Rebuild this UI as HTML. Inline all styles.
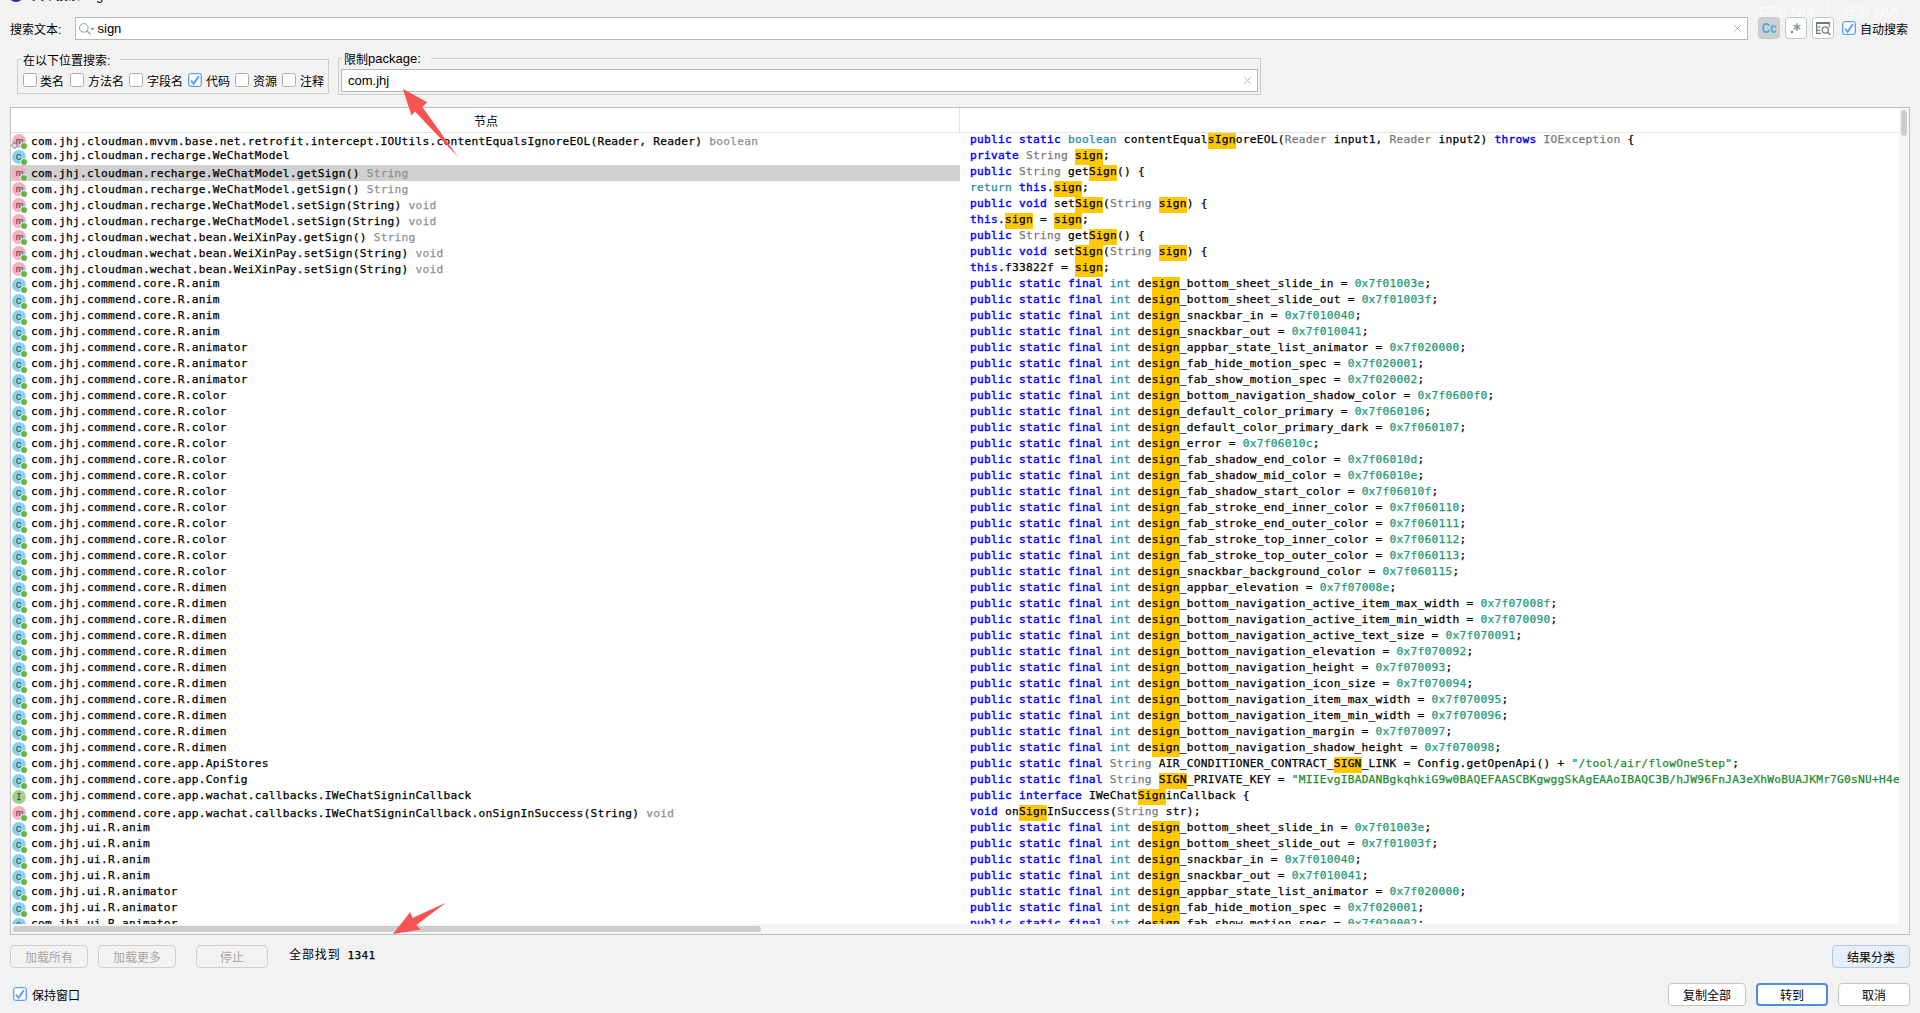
<!DOCTYPE html>
<html lang="zh-CN">
<head>
<meta charset="utf-8">
<title>文本搜索: sign</title>
<style>
html,body{margin:0;padding:0}
body{width:1920px;height:1013px;overflow:hidden;background:#f2f2f2;position:relative;font-family:"Liberation Sans", "Noto Sans CJK SC", sans-serif;font-size:12px;color:#000;line-height:1}
.abs{position:absolute}
.lbl{position:absolute;white-space:nowrap;font-size:12px;line-height:14px;height:14px;margin-top:2px}
.field{position:absolute;box-sizing:border-box;border:1px solid #b8b8b8;background:#fff}
.field .tx{position:absolute;top:3px;font-size:13px;line-height:15px;white-space:nowrap}
.cb{position:absolute;box-sizing:border-box;width:14px;height:14px;border:1px solid #adadad;border-radius:2.5px;background:#fff}
.cb.on{border-color:#5aa2eb;box-shadow:inset 0 0 0 .35px #5aa2eb}
.cb svg{position:absolute;left:-1px;top:-1px}
.grp{position:absolute;box-sizing:border-box;border:1px solid #cdcdcd}
.grp .ttl{position:absolute;top:-6px;left:3px;padding:0 10px 0 2px;background:#f2f2f2;font-size:12px;line-height:14px;white-space:nowrap}
.tb{position:absolute;top:17px;box-sizing:border-box;width:22px;height:22px;border:1px solid #c4c4c4;border-radius:3.5px;background:#fff}
.btn{position:absolute;box-sizing:border-box;height:23px;border:1px solid #c4c4c4;border-radius:4px;background:#fff;font-size:12px;line-height:25px;text-align:center;white-space:nowrap}
.btn.dis{background:#f2f2f2;color:#a6a6a6;border-color:#cfcfcf}
/* table */
#tbl{position:absolute;left:10px;top:107px;width:1900px;height:828px;box-sizing:border-box;border:1px solid #c0c0c0;background:#fff;overflow:hidden}
#hdr{position:absolute;left:0;top:0;width:1888px;height:24px;border-bottom:1px solid #e3e3e3}
#hdr .sep{position:absolute;left:948px;top:0;width:1px;height:24px;background:#e3e3e3}
#hdr .h1{position:absolute;left:1px;width:948px;top:7px;text-align:center;font-size:12px;line-height:14px}
.mono{font-family:"DejaVu Sans Mono", "Liberation Mono", "Noto Sans CJK SC", monospace;font-size:11.2px;letter-spacing:0.257px;-webkit-text-stroke:0.25px}
#vp{position:absolute;left:0;top:25px;width:1888px;height:791px;overflow:hidden;line-height:16px}
.r{position:relative;height:16px;white-space:pre}
.lc{position:absolute;left:0;top:0;width:949px;height:16px;overflow:hidden}
.sel .lc{background:#d0d0d0}
.lc span{position:absolute;left:20px;top:-1px}
.mr .lc span{top:1px}
.lc i{font-style:normal;color:#909090}
.ic{position:absolute;left:0;top:0;font-family:"DejaVu Sans Mono", "Liberation Mono", "Noto Sans CJK SC", monospace;letter-spacing:0}
.rc{position:absolute;left:959px;top:-1px;height:17px;line-height:16px;z-index:0}
.rc b{font-weight:normal}
b.k{color:#0000ff;-webkit-text-stroke:0.4px #0000ff}
b.t{color:#1f8aa6}
b.n{color:#7a7a7a}
b.x{color:#1a9a78}
b.s{color:#1a8c2e}
mark{background:none;color:#000;display:inline-block;position:relative;line-height:16px}
mark::before{content:"";position:absolute;left:0;right:0;top:1px;height:16px;background:#ffc800;z-index:-1}
#vsb{position:absolute;left:1888px;top:0;width:10px;height:816px;background:#f5f5f5}
#vsb div{position:absolute;left:2px;top:2px;width:6px;height:26px;border-radius:3px;background:#cdcdcd}
#hsb{position:absolute;left:0;top:816px;width:1898px;height:10px;background:#f5f5f5}
#hsb div{position:absolute;left:2px;top:2px;width:748px;height:6px;border-radius:3px;background:#cdcdcd}
</style>
</head>
<body>
<!-- cropped title bar remnants -->
<div class="abs" style="left:8px;top:-13.8px;width:16px;height:16px;border-radius:8px;background:#3a1fae"></div>
<div class="abs" style="left:32px;top:-11px;font-size:12px;line-height:14px;white-space:nowrap;color:#000">文本搜索: <span style="font-size:13px">sign</span></div>

<!-- faint overlay -->
<div class="abs" style="left:1759px;top:4px;font-size:14.5px;line-height:16px;color:#fafafa;white-space:nowrap">FPS <b>N/A</b></div>
<div class="abs" style="left:1828px;top:0;width:1px;height:17px;background:#f8f8f8"></div>
<div class="abs" style="left:1843px;top:4px;font-size:14.5px;line-height:16px;color:#fafafa;white-space:nowrap"><span style="font-size:13.5px">延迟</span> <b>N/A</b></div>

<!-- search row -->
<div class="lbl" style="left:10px;top:21px">搜索文本:</div>
<div class="field" style="left:75px;top:17px;width:1673px;height:23px">
  <svg class="abs" style="left:2px;top:3px" width="18" height="16" viewBox="0 0 18 16"><circle cx="5.8" cy="6.9" r="4.3" fill="none" stroke="#8a98a3" stroke-width="1"/><path d="M8.9 10l3.6 3.3" stroke="#8a98a3" stroke-width="1.2"/><path d="M12.3 7h4.4l-2.2 2.6z" fill="#8a98a3"/></svg>
  <div class="tx" style="left:21.5px">sign</div>
  <div class="abs" style="left:1658px;top:7px;line-height:0"><svg width="7" height="7" viewBox="0 0 7 7"><path d="M.3.3l6.4 6.4M6.7.3l-6.4 6.4" stroke="#aab3bb" stroke-width="1"/></svg></div>
</div>
<div class="tb" style="left:1758px;background:#cfcfcf;border-color:#c9c9c9"><div class="abs" style="left:0;top:3px;width:20px;text-align:center;font-weight:bold;font-size:14.5px;line-height:14px;color:#3cb4e6;transform:scaleX(.8)">Cc</div></div>
<div class="tb" style="left:1785px"><svg class="abs" style="left:2px;top:2px" width="16" height="16" viewBox="0 0 16 16"><rect x="3" y="11" width="2" height="2" fill="#6e7b85"/><path d="M9 3.2v7.8M5.6 5.15l6.8 3.9M12.4 5.15l-6.8 3.9" stroke="#8d99a2" stroke-width="1.5"/><circle cx="9" cy="7.1" r="1.6" fill="#8d99a2"/></svg></div>
<div class="tb" style="left:1812px"><svg class="abs" style="left:2px;top:2px" width="16" height="16" viewBox="0 0 16 16"><rect x="1" y="2" width="14" height="2" fill="#6e7b85"/><path d="M1.6 4v9.4H6M1.6 7H5.4M1.6 10.4H5" stroke="#6e7b85" stroke-width="1.2" fill="none"/><path d="M14.3 4v3.2" stroke="#6e7b85" stroke-width="1.2"/><circle cx="10.3" cy="10" r="3.1" fill="none" stroke="#6e7b85" stroke-width="1.2"/><path d="M12.6 12.3l2.8 2.5" stroke="#6e7b85" stroke-width="1.4"/></svg></div>
<div class="cb on" style="left:1842px;top:21px"><svg width="14" height="14" viewBox="0 0 14 14"><path d="M3 7.5L5.6 10.8L10.9 3.1" fill="none" stroke="#5aa2eb" stroke-width="1.9"/></svg></div>
<div class="lbl" style="left:1860px;top:21px">自动搜索</div>

<!-- group 1 -->
<div class="grp" style="left:17px;top:59px;width:312px;height:35px"><div class="ttl">在以下位置搜索:</div></div>
<div class="cb" style="left:23px;top:73px"></div><div class="lbl" style="left:40px;top:73px">类名</div>
<div class="cb" style="left:70px;top:73px"></div><div class="lbl" style="left:88px;top:73px">方法名</div>
<div class="cb" style="left:129px;top:73px"></div><div class="lbl" style="left:147px;top:73px">字段名</div>
<div class="cb on" style="left:188px;top:73px"><svg width="14" height="14" viewBox="0 0 14 14"><path d="M3 7.5L5.6 10.8L10.9 3.1" fill="none" stroke="#5aa2eb" stroke-width="1.9"/></svg></div><div class="lbl" style="left:206px;top:73px">代码</div>
<div class="cb" style="left:235px;top:73px"></div><div class="lbl" style="left:253px;top:73px">资源</div>
<div class="cb" style="left:282px;top:73px"></div><div class="lbl" style="left:300px;top:73px">注释</div>

<!-- group 2 -->
<div class="grp" style="left:338px;top:58px;width:923px;height:37px"><div class="ttl">限制<span style="font-size:13px;position:relative;top:-1px">package:</span></div></div>
<div class="field" style="left:341px;top:69px;width:917px;height:23px">
  <div class="tx" style="left:6px">com.jhj</div>
  <div class="abs" style="left:902px;top:7px;line-height:0"><svg width="7" height="7" viewBox="0 0 7 7"><path d="M.3.3l6.4 6.4M6.7.3l-6.4 6.4" stroke="#aab3bb" stroke-width="1"/></svg></div>
</div>

<!-- results table -->
<div id="tbl">
  <div id="hdr"><div class="h1">节点</div><div class="sep"></div></div>
  <div id="vp" class="mono">
<div class="r mr"><div class="lc"><svg class="ic" width="18" height="16" viewBox="0 0 18 16"><circle cx="8" cy="8" r="7" fill="#f6aebc"/><text x="8.5" y="10.8" font-size="9.2" text-anchor="middle" font-family="Liberation Sans,sans-serif" fill="#3f484f" stroke="#3f484f" stroke-width=".1">m</text><circle cx="13" cy="13" r="3.7" fill="#fff"/><circle cx="13" cy="13" r="3" fill="#62b543"/><path d="M3.6 9.3l3 3.1-3 3.1-3-3.1z" fill="#fff" fill-opacity=".5" stroke="#8796a1" stroke-width="1.1"/></svg><span>com.jhj.cloudman.mvvm.base.net.retrofit.intercept.IOUtils.contentEqualsIgnoreEOL(Reader, Reader) <i>boolean</i></span></div><div class="rc"><b class="k">public static </b><b class="t">boolean</b> contentEqual<mark>sIgn</mark>oreEOL(<b class="n">Reader</b> input1, <b class="n">Reader</b> input2) <b class="k">throws</b> <b class="n">IOException</b> {</div></div>
<div class="r"><div class="lc"><svg class="ic" width="18" height="16" viewBox="0 0 18 16"><circle cx="8" cy="8" r="7" fill="#8ad0ea"/><text x="7.7" y="10.7" font-size="10.4" text-anchor="middle" font-family="Liberation Sans,sans-serif" fill="#3f484f" stroke="#3f484f" stroke-width=".1">c</text><circle cx="13" cy="13" r="3.7" fill="#fff"/><circle cx="13" cy="13" r="3" fill="#62b543"/></svg><span>com.jhj.cloudman.recharge.WeChatModel</span></div><div class="rc"><b class="k">private</b> <b class="n">String</b> <mark>sign</mark>;</div></div>
<div class="r sel mr"><div class="lc"><svg class="ic" width="18" height="16" viewBox="0 0 18 16"><circle cx="8" cy="8" r="7" fill="#f6aebc"/><text x="8.5" y="10.8" font-size="9.2" text-anchor="middle" font-family="Liberation Sans,sans-serif" fill="#3f484f" stroke="#3f484f" stroke-width=".1">m</text><circle cx="13" cy="13" r="3.7" fill="#fff"/><circle cx="13" cy="13" r="3" fill="#62b543"/></svg><span>com.jhj.cloudman.recharge.WeChatModel.getSign() <i>String</i></span></div><div class="rc"><b class="k">public</b> <b class="n">String</b> get<mark>Sign</mark>() {</div></div>
<div class="r mr"><div class="lc"><svg class="ic" width="18" height="16" viewBox="0 0 18 16"><circle cx="8" cy="8" r="7" fill="#f6aebc"/><text x="8.5" y="10.8" font-size="9.2" text-anchor="middle" font-family="Liberation Sans,sans-serif" fill="#3f484f" stroke="#3f484f" stroke-width=".1">m</text><circle cx="13" cy="13" r="3.7" fill="#fff"/><circle cx="13" cy="13" r="3" fill="#62b543"/></svg><span>com.jhj.cloudman.recharge.WeChatModel.getSign() <i>String</i></span></div><div class="rc"><b class="t">return</b> <b class="k">this</b>.<mark>sign</mark>;</div></div>
<div class="r mr"><div class="lc"><svg class="ic" width="18" height="16" viewBox="0 0 18 16"><circle cx="8" cy="8" r="7" fill="#f6aebc"/><text x="8.5" y="10.8" font-size="9.2" text-anchor="middle" font-family="Liberation Sans,sans-serif" fill="#3f484f" stroke="#3f484f" stroke-width=".1">m</text><circle cx="13" cy="13" r="3.7" fill="#fff"/><circle cx="13" cy="13" r="3" fill="#62b543"/></svg><span>com.jhj.cloudman.recharge.WeChatModel.setSign(String) <i>void</i></span></div><div class="rc"><b class="k">public void</b> set<mark>Sign</mark>(<b class="n">String</b> <mark>sign</mark>) {</div></div>
<div class="r mr"><div class="lc"><svg class="ic" width="18" height="16" viewBox="0 0 18 16"><circle cx="8" cy="8" r="7" fill="#f6aebc"/><text x="8.5" y="10.8" font-size="9.2" text-anchor="middle" font-family="Liberation Sans,sans-serif" fill="#3f484f" stroke="#3f484f" stroke-width=".1">m</text><circle cx="13" cy="13" r="3.7" fill="#fff"/><circle cx="13" cy="13" r="3" fill="#62b543"/></svg><span>com.jhj.cloudman.recharge.WeChatModel.setSign(String) <i>void</i></span></div><div class="rc"><b class="k">this</b>.<mark>sign</mark> = <mark>sign</mark>;</div></div>
<div class="r mr"><div class="lc"><svg class="ic" width="18" height="16" viewBox="0 0 18 16"><circle cx="8" cy="8" r="7" fill="#f6aebc"/><text x="8.5" y="10.8" font-size="9.2" text-anchor="middle" font-family="Liberation Sans,sans-serif" fill="#3f484f" stroke="#3f484f" stroke-width=".1">m</text><circle cx="13" cy="13" r="3.7" fill="#fff"/><circle cx="13" cy="13" r="3" fill="#62b543"/></svg><span>com.jhj.cloudman.wechat.bean.WeiXinPay.getSign() <i>String</i></span></div><div class="rc"><b class="k">public</b> <b class="n">String</b> get<mark>Sign</mark>() {</div></div>
<div class="r mr"><div class="lc"><svg class="ic" width="18" height="16" viewBox="0 0 18 16"><circle cx="8" cy="8" r="7" fill="#f6aebc"/><text x="8.5" y="10.8" font-size="9.2" text-anchor="middle" font-family="Liberation Sans,sans-serif" fill="#3f484f" stroke="#3f484f" stroke-width=".1">m</text><circle cx="13" cy="13" r="3.7" fill="#fff"/><circle cx="13" cy="13" r="3" fill="#62b543"/></svg><span>com.jhj.cloudman.wechat.bean.WeiXinPay.setSign(String) <i>void</i></span></div><div class="rc"><b class="k">public void</b> set<mark>Sign</mark>(<b class="n">String</b> <mark>sign</mark>) {</div></div>
<div class="r mr"><div class="lc"><svg class="ic" width="18" height="16" viewBox="0 0 18 16"><circle cx="8" cy="8" r="7" fill="#f6aebc"/><text x="8.5" y="10.8" font-size="9.2" text-anchor="middle" font-family="Liberation Sans,sans-serif" fill="#3f484f" stroke="#3f484f" stroke-width=".1">m</text><circle cx="13" cy="13" r="3.7" fill="#fff"/><circle cx="13" cy="13" r="3" fill="#62b543"/></svg><span>com.jhj.cloudman.wechat.bean.WeiXinPay.setSign(String) <i>void</i></span></div><div class="rc"><b class="k">this</b>.f33822f = <mark>sign</mark>;</div></div>
<div class="r"><div class="lc"><svg class="ic" width="18" height="16" viewBox="0 0 18 16"><circle cx="8" cy="8" r="7" fill="#8ad0ea"/><text x="7.7" y="10.7" font-size="10.4" text-anchor="middle" font-family="Liberation Sans,sans-serif" fill="#3f484f" stroke="#3f484f" stroke-width=".1">c</text><circle cx="13" cy="13" r="3.7" fill="#fff"/><circle cx="13" cy="13" r="3" fill="#62b543"/></svg><span>com.jhj.commend.core.R.anim</span></div><div class="rc"><b class="k">public static final </b><b class="t">int</b> de<mark>sign</mark>_bottom_sheet_slide_in = <b class="x">0x7f01003e</b>;</div></div>
<div class="r"><div class="lc"><svg class="ic" width="18" height="16" viewBox="0 0 18 16"><circle cx="8" cy="8" r="7" fill="#8ad0ea"/><text x="7.7" y="10.7" font-size="10.4" text-anchor="middle" font-family="Liberation Sans,sans-serif" fill="#3f484f" stroke="#3f484f" stroke-width=".1">c</text><circle cx="13" cy="13" r="3.7" fill="#fff"/><circle cx="13" cy="13" r="3" fill="#62b543"/></svg><span>com.jhj.commend.core.R.anim</span></div><div class="rc"><b class="k">public static final </b><b class="t">int</b> de<mark>sign</mark>_bottom_sheet_slide_out = <b class="x">0x7f01003f</b>;</div></div>
<div class="r"><div class="lc"><svg class="ic" width="18" height="16" viewBox="0 0 18 16"><circle cx="8" cy="8" r="7" fill="#8ad0ea"/><text x="7.7" y="10.7" font-size="10.4" text-anchor="middle" font-family="Liberation Sans,sans-serif" fill="#3f484f" stroke="#3f484f" stroke-width=".1">c</text><circle cx="13" cy="13" r="3.7" fill="#fff"/><circle cx="13" cy="13" r="3" fill="#62b543"/></svg><span>com.jhj.commend.core.R.anim</span></div><div class="rc"><b class="k">public static final </b><b class="t">int</b> de<mark>sign</mark>_snackbar_in = <b class="x">0x7f010040</b>;</div></div>
<div class="r"><div class="lc"><svg class="ic" width="18" height="16" viewBox="0 0 18 16"><circle cx="8" cy="8" r="7" fill="#8ad0ea"/><text x="7.7" y="10.7" font-size="10.4" text-anchor="middle" font-family="Liberation Sans,sans-serif" fill="#3f484f" stroke="#3f484f" stroke-width=".1">c</text><circle cx="13" cy="13" r="3.7" fill="#fff"/><circle cx="13" cy="13" r="3" fill="#62b543"/></svg><span>com.jhj.commend.core.R.anim</span></div><div class="rc"><b class="k">public static final </b><b class="t">int</b> de<mark>sign</mark>_snackbar_out = <b class="x">0x7f010041</b>;</div></div>
<div class="r"><div class="lc"><svg class="ic" width="18" height="16" viewBox="0 0 18 16"><circle cx="8" cy="8" r="7" fill="#8ad0ea"/><text x="7.7" y="10.7" font-size="10.4" text-anchor="middle" font-family="Liberation Sans,sans-serif" fill="#3f484f" stroke="#3f484f" stroke-width=".1">c</text><circle cx="13" cy="13" r="3.7" fill="#fff"/><circle cx="13" cy="13" r="3" fill="#62b543"/></svg><span>com.jhj.commend.core.R.animator</span></div><div class="rc"><b class="k">public static final </b><b class="t">int</b> de<mark>sign</mark>_appbar_state_list_animator = <b class="x">0x7f020000</b>;</div></div>
<div class="r"><div class="lc"><svg class="ic" width="18" height="16" viewBox="0 0 18 16"><circle cx="8" cy="8" r="7" fill="#8ad0ea"/><text x="7.7" y="10.7" font-size="10.4" text-anchor="middle" font-family="Liberation Sans,sans-serif" fill="#3f484f" stroke="#3f484f" stroke-width=".1">c</text><circle cx="13" cy="13" r="3.7" fill="#fff"/><circle cx="13" cy="13" r="3" fill="#62b543"/></svg><span>com.jhj.commend.core.R.animator</span></div><div class="rc"><b class="k">public static final </b><b class="t">int</b> de<mark>sign</mark>_fab_hide_motion_spec = <b class="x">0x7f020001</b>;</div></div>
<div class="r"><div class="lc"><svg class="ic" width="18" height="16" viewBox="0 0 18 16"><circle cx="8" cy="8" r="7" fill="#8ad0ea"/><text x="7.7" y="10.7" font-size="10.4" text-anchor="middle" font-family="Liberation Sans,sans-serif" fill="#3f484f" stroke="#3f484f" stroke-width=".1">c</text><circle cx="13" cy="13" r="3.7" fill="#fff"/><circle cx="13" cy="13" r="3" fill="#62b543"/></svg><span>com.jhj.commend.core.R.animator</span></div><div class="rc"><b class="k">public static final </b><b class="t">int</b> de<mark>sign</mark>_fab_show_motion_spec = <b class="x">0x7f020002</b>;</div></div>
<div class="r"><div class="lc"><svg class="ic" width="18" height="16" viewBox="0 0 18 16"><circle cx="8" cy="8" r="7" fill="#8ad0ea"/><text x="7.7" y="10.7" font-size="10.4" text-anchor="middle" font-family="Liberation Sans,sans-serif" fill="#3f484f" stroke="#3f484f" stroke-width=".1">c</text><circle cx="13" cy="13" r="3.7" fill="#fff"/><circle cx="13" cy="13" r="3" fill="#62b543"/></svg><span>com.jhj.commend.core.R.color</span></div><div class="rc"><b class="k">public static final </b><b class="t">int</b> de<mark>sign</mark>_bottom_navigation_shadow_color = <b class="x">0x7f0600f0</b>;</div></div>
<div class="r"><div class="lc"><svg class="ic" width="18" height="16" viewBox="0 0 18 16"><circle cx="8" cy="8" r="7" fill="#8ad0ea"/><text x="7.7" y="10.7" font-size="10.4" text-anchor="middle" font-family="Liberation Sans,sans-serif" fill="#3f484f" stroke="#3f484f" stroke-width=".1">c</text><circle cx="13" cy="13" r="3.7" fill="#fff"/><circle cx="13" cy="13" r="3" fill="#62b543"/></svg><span>com.jhj.commend.core.R.color</span></div><div class="rc"><b class="k">public static final </b><b class="t">int</b> de<mark>sign</mark>_default_color_primary = <b class="x">0x7f060106</b>;</div></div>
<div class="r"><div class="lc"><svg class="ic" width="18" height="16" viewBox="0 0 18 16"><circle cx="8" cy="8" r="7" fill="#8ad0ea"/><text x="7.7" y="10.7" font-size="10.4" text-anchor="middle" font-family="Liberation Sans,sans-serif" fill="#3f484f" stroke="#3f484f" stroke-width=".1">c</text><circle cx="13" cy="13" r="3.7" fill="#fff"/><circle cx="13" cy="13" r="3" fill="#62b543"/></svg><span>com.jhj.commend.core.R.color</span></div><div class="rc"><b class="k">public static final </b><b class="t">int</b> de<mark>sign</mark>_default_color_primary_dark = <b class="x">0x7f060107</b>;</div></div>
<div class="r"><div class="lc"><svg class="ic" width="18" height="16" viewBox="0 0 18 16"><circle cx="8" cy="8" r="7" fill="#8ad0ea"/><text x="7.7" y="10.7" font-size="10.4" text-anchor="middle" font-family="Liberation Sans,sans-serif" fill="#3f484f" stroke="#3f484f" stroke-width=".1">c</text><circle cx="13" cy="13" r="3.7" fill="#fff"/><circle cx="13" cy="13" r="3" fill="#62b543"/></svg><span>com.jhj.commend.core.R.color</span></div><div class="rc"><b class="k">public static final </b><b class="t">int</b> de<mark>sign</mark>_error = <b class="x">0x7f06010c</b>;</div></div>
<div class="r"><div class="lc"><svg class="ic" width="18" height="16" viewBox="0 0 18 16"><circle cx="8" cy="8" r="7" fill="#8ad0ea"/><text x="7.7" y="10.7" font-size="10.4" text-anchor="middle" font-family="Liberation Sans,sans-serif" fill="#3f484f" stroke="#3f484f" stroke-width=".1">c</text><circle cx="13" cy="13" r="3.7" fill="#fff"/><circle cx="13" cy="13" r="3" fill="#62b543"/></svg><span>com.jhj.commend.core.R.color</span></div><div class="rc"><b class="k">public static final </b><b class="t">int</b> de<mark>sign</mark>_fab_shadow_end_color = <b class="x">0x7f06010d</b>;</div></div>
<div class="r"><div class="lc"><svg class="ic" width="18" height="16" viewBox="0 0 18 16"><circle cx="8" cy="8" r="7" fill="#8ad0ea"/><text x="7.7" y="10.7" font-size="10.4" text-anchor="middle" font-family="Liberation Sans,sans-serif" fill="#3f484f" stroke="#3f484f" stroke-width=".1">c</text><circle cx="13" cy="13" r="3.7" fill="#fff"/><circle cx="13" cy="13" r="3" fill="#62b543"/></svg><span>com.jhj.commend.core.R.color</span></div><div class="rc"><b class="k">public static final </b><b class="t">int</b> de<mark>sign</mark>_fab_shadow_mid_color = <b class="x">0x7f06010e</b>;</div></div>
<div class="r"><div class="lc"><svg class="ic" width="18" height="16" viewBox="0 0 18 16"><circle cx="8" cy="8" r="7" fill="#8ad0ea"/><text x="7.7" y="10.7" font-size="10.4" text-anchor="middle" font-family="Liberation Sans,sans-serif" fill="#3f484f" stroke="#3f484f" stroke-width=".1">c</text><circle cx="13" cy="13" r="3.7" fill="#fff"/><circle cx="13" cy="13" r="3" fill="#62b543"/></svg><span>com.jhj.commend.core.R.color</span></div><div class="rc"><b class="k">public static final </b><b class="t">int</b> de<mark>sign</mark>_fab_shadow_start_color = <b class="x">0x7f06010f</b>;</div></div>
<div class="r"><div class="lc"><svg class="ic" width="18" height="16" viewBox="0 0 18 16"><circle cx="8" cy="8" r="7" fill="#8ad0ea"/><text x="7.7" y="10.7" font-size="10.4" text-anchor="middle" font-family="Liberation Sans,sans-serif" fill="#3f484f" stroke="#3f484f" stroke-width=".1">c</text><circle cx="13" cy="13" r="3.7" fill="#fff"/><circle cx="13" cy="13" r="3" fill="#62b543"/></svg><span>com.jhj.commend.core.R.color</span></div><div class="rc"><b class="k">public static final </b><b class="t">int</b> de<mark>sign</mark>_fab_stroke_end_inner_color = <b class="x">0x7f060110</b>;</div></div>
<div class="r"><div class="lc"><svg class="ic" width="18" height="16" viewBox="0 0 18 16"><circle cx="8" cy="8" r="7" fill="#8ad0ea"/><text x="7.7" y="10.7" font-size="10.4" text-anchor="middle" font-family="Liberation Sans,sans-serif" fill="#3f484f" stroke="#3f484f" stroke-width=".1">c</text><circle cx="13" cy="13" r="3.7" fill="#fff"/><circle cx="13" cy="13" r="3" fill="#62b543"/></svg><span>com.jhj.commend.core.R.color</span></div><div class="rc"><b class="k">public static final </b><b class="t">int</b> de<mark>sign</mark>_fab_stroke_end_outer_color = <b class="x">0x7f060111</b>;</div></div>
<div class="r"><div class="lc"><svg class="ic" width="18" height="16" viewBox="0 0 18 16"><circle cx="8" cy="8" r="7" fill="#8ad0ea"/><text x="7.7" y="10.7" font-size="10.4" text-anchor="middle" font-family="Liberation Sans,sans-serif" fill="#3f484f" stroke="#3f484f" stroke-width=".1">c</text><circle cx="13" cy="13" r="3.7" fill="#fff"/><circle cx="13" cy="13" r="3" fill="#62b543"/></svg><span>com.jhj.commend.core.R.color</span></div><div class="rc"><b class="k">public static final </b><b class="t">int</b> de<mark>sign</mark>_fab_stroke_top_inner_color = <b class="x">0x7f060112</b>;</div></div>
<div class="r"><div class="lc"><svg class="ic" width="18" height="16" viewBox="0 0 18 16"><circle cx="8" cy="8" r="7" fill="#8ad0ea"/><text x="7.7" y="10.7" font-size="10.4" text-anchor="middle" font-family="Liberation Sans,sans-serif" fill="#3f484f" stroke="#3f484f" stroke-width=".1">c</text><circle cx="13" cy="13" r="3.7" fill="#fff"/><circle cx="13" cy="13" r="3" fill="#62b543"/></svg><span>com.jhj.commend.core.R.color</span></div><div class="rc"><b class="k">public static final </b><b class="t">int</b> de<mark>sign</mark>_fab_stroke_top_outer_color = <b class="x">0x7f060113</b>;</div></div>
<div class="r"><div class="lc"><svg class="ic" width="18" height="16" viewBox="0 0 18 16"><circle cx="8" cy="8" r="7" fill="#8ad0ea"/><text x="7.7" y="10.7" font-size="10.4" text-anchor="middle" font-family="Liberation Sans,sans-serif" fill="#3f484f" stroke="#3f484f" stroke-width=".1">c</text><circle cx="13" cy="13" r="3.7" fill="#fff"/><circle cx="13" cy="13" r="3" fill="#62b543"/></svg><span>com.jhj.commend.core.R.color</span></div><div class="rc"><b class="k">public static final </b><b class="t">int</b> de<mark>sign</mark>_snackbar_background_color = <b class="x">0x7f060115</b>;</div></div>
<div class="r"><div class="lc"><svg class="ic" width="18" height="16" viewBox="0 0 18 16"><circle cx="8" cy="8" r="7" fill="#8ad0ea"/><text x="7.7" y="10.7" font-size="10.4" text-anchor="middle" font-family="Liberation Sans,sans-serif" fill="#3f484f" stroke="#3f484f" stroke-width=".1">c</text><circle cx="13" cy="13" r="3.7" fill="#fff"/><circle cx="13" cy="13" r="3" fill="#62b543"/></svg><span>com.jhj.commend.core.R.dimen</span></div><div class="rc"><b class="k">public static final </b><b class="t">int</b> de<mark>sign</mark>_appbar_elevation = <b class="x">0x7f07008e</b>;</div></div>
<div class="r"><div class="lc"><svg class="ic" width="18" height="16" viewBox="0 0 18 16"><circle cx="8" cy="8" r="7" fill="#8ad0ea"/><text x="7.7" y="10.7" font-size="10.4" text-anchor="middle" font-family="Liberation Sans,sans-serif" fill="#3f484f" stroke="#3f484f" stroke-width=".1">c</text><circle cx="13" cy="13" r="3.7" fill="#fff"/><circle cx="13" cy="13" r="3" fill="#62b543"/></svg><span>com.jhj.commend.core.R.dimen</span></div><div class="rc"><b class="k">public static final </b><b class="t">int</b> de<mark>sign</mark>_bottom_navigation_active_item_max_width = <b class="x">0x7f07008f</b>;</div></div>
<div class="r"><div class="lc"><svg class="ic" width="18" height="16" viewBox="0 0 18 16"><circle cx="8" cy="8" r="7" fill="#8ad0ea"/><text x="7.7" y="10.7" font-size="10.4" text-anchor="middle" font-family="Liberation Sans,sans-serif" fill="#3f484f" stroke="#3f484f" stroke-width=".1">c</text><circle cx="13" cy="13" r="3.7" fill="#fff"/><circle cx="13" cy="13" r="3" fill="#62b543"/></svg><span>com.jhj.commend.core.R.dimen</span></div><div class="rc"><b class="k">public static final </b><b class="t">int</b> de<mark>sign</mark>_bottom_navigation_active_item_min_width = <b class="x">0x7f070090</b>;</div></div>
<div class="r"><div class="lc"><svg class="ic" width="18" height="16" viewBox="0 0 18 16"><circle cx="8" cy="8" r="7" fill="#8ad0ea"/><text x="7.7" y="10.7" font-size="10.4" text-anchor="middle" font-family="Liberation Sans,sans-serif" fill="#3f484f" stroke="#3f484f" stroke-width=".1">c</text><circle cx="13" cy="13" r="3.7" fill="#fff"/><circle cx="13" cy="13" r="3" fill="#62b543"/></svg><span>com.jhj.commend.core.R.dimen</span></div><div class="rc"><b class="k">public static final </b><b class="t">int</b> de<mark>sign</mark>_bottom_navigation_active_text_size = <b class="x">0x7f070091</b>;</div></div>
<div class="r"><div class="lc"><svg class="ic" width="18" height="16" viewBox="0 0 18 16"><circle cx="8" cy="8" r="7" fill="#8ad0ea"/><text x="7.7" y="10.7" font-size="10.4" text-anchor="middle" font-family="Liberation Sans,sans-serif" fill="#3f484f" stroke="#3f484f" stroke-width=".1">c</text><circle cx="13" cy="13" r="3.7" fill="#fff"/><circle cx="13" cy="13" r="3" fill="#62b543"/></svg><span>com.jhj.commend.core.R.dimen</span></div><div class="rc"><b class="k">public static final </b><b class="t">int</b> de<mark>sign</mark>_bottom_navigation_elevation = <b class="x">0x7f070092</b>;</div></div>
<div class="r"><div class="lc"><svg class="ic" width="18" height="16" viewBox="0 0 18 16"><circle cx="8" cy="8" r="7" fill="#8ad0ea"/><text x="7.7" y="10.7" font-size="10.4" text-anchor="middle" font-family="Liberation Sans,sans-serif" fill="#3f484f" stroke="#3f484f" stroke-width=".1">c</text><circle cx="13" cy="13" r="3.7" fill="#fff"/><circle cx="13" cy="13" r="3" fill="#62b543"/></svg><span>com.jhj.commend.core.R.dimen</span></div><div class="rc"><b class="k">public static final </b><b class="t">int</b> de<mark>sign</mark>_bottom_navigation_height = <b class="x">0x7f070093</b>;</div></div>
<div class="r"><div class="lc"><svg class="ic" width="18" height="16" viewBox="0 0 18 16"><circle cx="8" cy="8" r="7" fill="#8ad0ea"/><text x="7.7" y="10.7" font-size="10.4" text-anchor="middle" font-family="Liberation Sans,sans-serif" fill="#3f484f" stroke="#3f484f" stroke-width=".1">c</text><circle cx="13" cy="13" r="3.7" fill="#fff"/><circle cx="13" cy="13" r="3" fill="#62b543"/></svg><span>com.jhj.commend.core.R.dimen</span></div><div class="rc"><b class="k">public static final </b><b class="t">int</b> de<mark>sign</mark>_bottom_navigation_icon_size = <b class="x">0x7f070094</b>;</div></div>
<div class="r"><div class="lc"><svg class="ic" width="18" height="16" viewBox="0 0 18 16"><circle cx="8" cy="8" r="7" fill="#8ad0ea"/><text x="7.7" y="10.7" font-size="10.4" text-anchor="middle" font-family="Liberation Sans,sans-serif" fill="#3f484f" stroke="#3f484f" stroke-width=".1">c</text><circle cx="13" cy="13" r="3.7" fill="#fff"/><circle cx="13" cy="13" r="3" fill="#62b543"/></svg><span>com.jhj.commend.core.R.dimen</span></div><div class="rc"><b class="k">public static final </b><b class="t">int</b> de<mark>sign</mark>_bottom_navigation_item_max_width = <b class="x">0x7f070095</b>;</div></div>
<div class="r"><div class="lc"><svg class="ic" width="18" height="16" viewBox="0 0 18 16"><circle cx="8" cy="8" r="7" fill="#8ad0ea"/><text x="7.7" y="10.7" font-size="10.4" text-anchor="middle" font-family="Liberation Sans,sans-serif" fill="#3f484f" stroke="#3f484f" stroke-width=".1">c</text><circle cx="13" cy="13" r="3.7" fill="#fff"/><circle cx="13" cy="13" r="3" fill="#62b543"/></svg><span>com.jhj.commend.core.R.dimen</span></div><div class="rc"><b class="k">public static final </b><b class="t">int</b> de<mark>sign</mark>_bottom_navigation_item_min_width = <b class="x">0x7f070096</b>;</div></div>
<div class="r"><div class="lc"><svg class="ic" width="18" height="16" viewBox="0 0 18 16"><circle cx="8" cy="8" r="7" fill="#8ad0ea"/><text x="7.7" y="10.7" font-size="10.4" text-anchor="middle" font-family="Liberation Sans,sans-serif" fill="#3f484f" stroke="#3f484f" stroke-width=".1">c</text><circle cx="13" cy="13" r="3.7" fill="#fff"/><circle cx="13" cy="13" r="3" fill="#62b543"/></svg><span>com.jhj.commend.core.R.dimen</span></div><div class="rc"><b class="k">public static final </b><b class="t">int</b> de<mark>sign</mark>_bottom_navigation_margin = <b class="x">0x7f070097</b>;</div></div>
<div class="r"><div class="lc"><svg class="ic" width="18" height="16" viewBox="0 0 18 16"><circle cx="8" cy="8" r="7" fill="#8ad0ea"/><text x="7.7" y="10.7" font-size="10.4" text-anchor="middle" font-family="Liberation Sans,sans-serif" fill="#3f484f" stroke="#3f484f" stroke-width=".1">c</text><circle cx="13" cy="13" r="3.7" fill="#fff"/><circle cx="13" cy="13" r="3" fill="#62b543"/></svg><span>com.jhj.commend.core.R.dimen</span></div><div class="rc"><b class="k">public static final </b><b class="t">int</b> de<mark>sign</mark>_bottom_navigation_shadow_height = <b class="x">0x7f070098</b>;</div></div>
<div class="r"><div class="lc"><svg class="ic" width="18" height="16" viewBox="0 0 18 16"><circle cx="8" cy="8" r="7" fill="#8ad0ea"/><text x="7.7" y="10.7" font-size="10.4" text-anchor="middle" font-family="Liberation Sans,sans-serif" fill="#3f484f" stroke="#3f484f" stroke-width=".1">c</text><circle cx="13" cy="13" r="3.7" fill="#fff"/><circle cx="13" cy="13" r="3" fill="#62b543"/></svg><span>com.jhj.commend.core.app.ApiStores</span></div><div class="rc"><b class="k">public static final </b><b class="n">String</b> AIR_CONDITIONER_CONTRACT_<mark>SIGN</mark>_LINK = Config.getOpenApi() + <b class="s">"/tool/air/flowOneStep"</b>;</div></div>
<div class="r"><div class="lc"><svg class="ic" width="18" height="16" viewBox="0 0 18 16"><circle cx="8" cy="8" r="7" fill="#8ad0ea"/><text x="7.7" y="10.7" font-size="10.4" text-anchor="middle" font-family="Liberation Sans,sans-serif" fill="#3f484f" stroke="#3f484f" stroke-width=".1">c</text><circle cx="13" cy="13" r="3.7" fill="#fff"/><circle cx="13" cy="13" r="3" fill="#62b543"/></svg><span>com.jhj.commend.core.app.Config</span></div><div class="rc"><b class="k">public static final </b><b class="n">String</b> <mark>SIGN</mark>_PRIVATE_KEY = <b class="s">"MIIEvgIBADANBgkqhkiG9w0BAQEFAASCBKgwggSkAgEAAoIBAQC3B/hJW96FnJA3eXhWoBUAJKMr7G0sNU+H4eXrQ8mZpL2vT</b></div></div>
<div class="r"><div class="lc"><svg class="ic" width="18" height="16" viewBox="0 0 18 16"><circle cx="8" cy="8" r="7" fill="#9fd18b"/><text x="8" y="10.9" font-size="8" text-anchor="middle" fill="#3f484f" stroke="#3f484f" stroke-width=".25">I</text></svg><span>com.jhj.commend.core.app.wachat.callbacks.IWeChatSigninCallback</span></div><div class="rc"><b class="k">public interface</b> IWeChat<mark>Sign</mark>inCallback {</div></div>
<div class="r mr"><div class="lc"><svg class="ic" width="18" height="16" viewBox="0 0 18 16"><circle cx="8" cy="8" r="7" fill="#f6aebc"/><text x="8.5" y="10.8" font-size="9.2" text-anchor="middle" font-family="Liberation Sans,sans-serif" fill="#3f484f" stroke="#3f484f" stroke-width=".1">m</text><circle cx="13" cy="13" r="3.7" fill="#fff"/><circle cx="13" cy="13" r="3" fill="#62b543"/></svg><span>com.jhj.commend.core.app.wachat.callbacks.IWeChatSigninCallback.onSignInSuccess(String) <i>void</i></span></div><div class="rc"><b class="k">void</b> on<mark>Sign</mark>InSuccess(<b class="n">String</b> str);</div></div>
<div class="r"><div class="lc"><svg class="ic" width="18" height="16" viewBox="0 0 18 16"><circle cx="8" cy="8" r="7" fill="#8ad0ea"/><text x="7.7" y="10.7" font-size="10.4" text-anchor="middle" font-family="Liberation Sans,sans-serif" fill="#3f484f" stroke="#3f484f" stroke-width=".1">c</text><circle cx="13" cy="13" r="3.7" fill="#fff"/><circle cx="13" cy="13" r="3" fill="#62b543"/></svg><span>com.jhj.ui.R.anim</span></div><div class="rc"><b class="k">public static final </b><b class="t">int</b> de<mark>sign</mark>_bottom_sheet_slide_in = <b class="x">0x7f01003e</b>;</div></div>
<div class="r"><div class="lc"><svg class="ic" width="18" height="16" viewBox="0 0 18 16"><circle cx="8" cy="8" r="7" fill="#8ad0ea"/><text x="7.7" y="10.7" font-size="10.4" text-anchor="middle" font-family="Liberation Sans,sans-serif" fill="#3f484f" stroke="#3f484f" stroke-width=".1">c</text><circle cx="13" cy="13" r="3.7" fill="#fff"/><circle cx="13" cy="13" r="3" fill="#62b543"/></svg><span>com.jhj.ui.R.anim</span></div><div class="rc"><b class="k">public static final </b><b class="t">int</b> de<mark>sign</mark>_bottom_sheet_slide_out = <b class="x">0x7f01003f</b>;</div></div>
<div class="r"><div class="lc"><svg class="ic" width="18" height="16" viewBox="0 0 18 16"><circle cx="8" cy="8" r="7" fill="#8ad0ea"/><text x="7.7" y="10.7" font-size="10.4" text-anchor="middle" font-family="Liberation Sans,sans-serif" fill="#3f484f" stroke="#3f484f" stroke-width=".1">c</text><circle cx="13" cy="13" r="3.7" fill="#fff"/><circle cx="13" cy="13" r="3" fill="#62b543"/></svg><span>com.jhj.ui.R.anim</span></div><div class="rc"><b class="k">public static final </b><b class="t">int</b> de<mark>sign</mark>_snackbar_in = <b class="x">0x7f010040</b>;</div></div>
<div class="r"><div class="lc"><svg class="ic" width="18" height="16" viewBox="0 0 18 16"><circle cx="8" cy="8" r="7" fill="#8ad0ea"/><text x="7.7" y="10.7" font-size="10.4" text-anchor="middle" font-family="Liberation Sans,sans-serif" fill="#3f484f" stroke="#3f484f" stroke-width=".1">c</text><circle cx="13" cy="13" r="3.7" fill="#fff"/><circle cx="13" cy="13" r="3" fill="#62b543"/></svg><span>com.jhj.ui.R.anim</span></div><div class="rc"><b class="k">public static final </b><b class="t">int</b> de<mark>sign</mark>_snackbar_out = <b class="x">0x7f010041</b>;</div></div>
<div class="r"><div class="lc"><svg class="ic" width="18" height="16" viewBox="0 0 18 16"><circle cx="8" cy="8" r="7" fill="#8ad0ea"/><text x="7.7" y="10.7" font-size="10.4" text-anchor="middle" font-family="Liberation Sans,sans-serif" fill="#3f484f" stroke="#3f484f" stroke-width=".1">c</text><circle cx="13" cy="13" r="3.7" fill="#fff"/><circle cx="13" cy="13" r="3" fill="#62b543"/></svg><span>com.jhj.ui.R.animator</span></div><div class="rc"><b class="k">public static final </b><b class="t">int</b> de<mark>sign</mark>_appbar_state_list_animator = <b class="x">0x7f020000</b>;</div></div>
<div class="r"><div class="lc"><svg class="ic" width="18" height="16" viewBox="0 0 18 16"><circle cx="8" cy="8" r="7" fill="#8ad0ea"/><text x="7.7" y="10.7" font-size="10.4" text-anchor="middle" font-family="Liberation Sans,sans-serif" fill="#3f484f" stroke="#3f484f" stroke-width=".1">c</text><circle cx="13" cy="13" r="3.7" fill="#fff"/><circle cx="13" cy="13" r="3" fill="#62b543"/></svg><span>com.jhj.ui.R.animator</span></div><div class="rc"><b class="k">public static final </b><b class="t">int</b> de<mark>sign</mark>_fab_hide_motion_spec = <b class="x">0x7f020001</b>;</div></div>
<div class="r"><div class="lc"><svg class="ic" width="18" height="16" viewBox="0 0 18 16"><circle cx="8" cy="8" r="7" fill="#8ad0ea"/><text x="7.7" y="10.7" font-size="10.4" text-anchor="middle" font-family="Liberation Sans,sans-serif" fill="#3f484f" stroke="#3f484f" stroke-width=".1">c</text><circle cx="13" cy="13" r="3.7" fill="#fff"/><circle cx="13" cy="13" r="3" fill="#62b543"/></svg><span>com.jhj.ui.R.animator</span></div><div class="rc"><b class="k">public static final </b><b class="t">int</b> de<mark>sign</mark>_fab_show_motion_spec = <b class="x">0x7f020002</b>;</div></div>
  </div>
  <div id="vsb"><div></div></div>
  <div id="hsb"><div></div></div>
</div>

<!-- bottom controls -->
<div class="btn dis" style="left:10px;top:945px;width:78px">加载所有</div>
<div class="btn dis" style="left:98px;top:945px;width:78px">加载更多</div>
<div class="btn dis" style="left:196px;top:945px;width:72px">停止</div>
<div class="abs mono" style="left:289px;top:946px;line-height:16px;white-space:pre"><span style="font-family:'Noto Sans CJK SC',sans-serif;font-size:12px;letter-spacing:.9px;-webkit-text-stroke:0">全部找到</span> 1341</div>
<div class="btn" style="left:1832px;top:945px;width:78px;background:#e6eefa;border-color:#b3c9e8">结果分类</div>

<div class="cb on" style="left:13px;top:987px"><svg width="14" height="14" viewBox="0 0 14 14"><path d="M3 7.5L5.6 10.8L10.9 3.1" fill="none" stroke="#5aa2eb" stroke-width="1.9"/></svg></div>
<div class="lbl" style="left:32px;top:987px">保持窗口</div>
<div class="btn" style="left:1668px;top:983px;width:78px">复制全部</div>
<div class="btn" style="left:1756px;top:983px;width:72px;border:2px solid #4a8fe2;line-height:23px">转到</div>
<div class="btn" style="left:1838px;top:983px;width:72px">取消</div>

<!-- red annotation arrows -->
<svg class="abs" style="left:0;top:0;pointer-events:none" width="1920" height="1013" viewBox="0 0 1920 1013">
  <polygon points="402.9,88.8 427.2,102.3 422.4,107 458,156.9 415,111.5 411.4,115.4" fill="#f85353"/>
  <polygon points="392.9,934.1 410.3,912.1 412.3,918 445.8,902.7 416.4,924.9 420.6,929.4" fill="#f85353"/>
</svg>
</body>
</html>
